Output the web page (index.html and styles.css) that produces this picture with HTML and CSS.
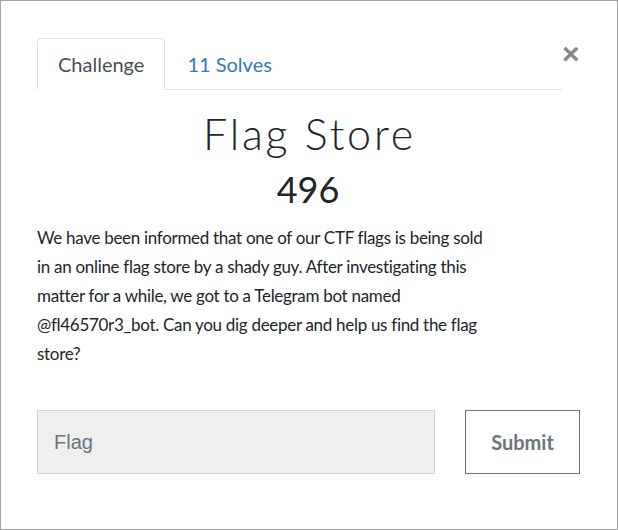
FILE: index.html
```html
<!DOCTYPE html>
<html>
<head>
<meta charset="utf-8">
<link rel="stylesheet" href="styles.css">
</head>
<body>
<div class="modal">
  <div class="header">
    <ul class="tabs">
      <li class="tab active">Challenge</li>
      <li class="tab link">11 Solves</li>
    </ul>
    <button class="close" aria-label="Close">&times;</button>
  </div>
  <h2 class="title">Flag Store</h2>
  <h3 class="value">496</h3>
  <p class="desc">We have been informed that one of our CTF flags is being sold in an online flag store by a shady guy. After investigating this matter for a while, we got to a Telegram bot named @fl46570r3_bot. Can you dig deeper and help us find the flag store?</p>
  <form class="form">
    <input class="flag" type="text" placeholder="Flag">
    <button class="submit" type="button">Submit</button>
  </form>
</div>
</body>
</html>
```

FILE: styles.css
```css
html, body {
  margin: 0;
  padding: 0;
  background: #fff;
}
.modal {
  box-sizing: border-box;
  width: 618px;
  height: 530px;
  border: 1px solid #a3a3a3;
  padding: 37px 38px 0 36px;
  font-family: Lato, "Noto Sans", sans-serif;
  color: #212529;
}
.header {
  display: flex;
  align-items: flex-start;
  padding-right: 1px;
}
.tabs {
  flex: 1;
  display: flex;
  list-style: none;
  margin: 0;
  padding: 0;
  border-bottom: 1px solid #dee2e6;
}
.tab {
  font-size: 20px;
  line-height: 26px;
  padding: 12px 20px 12px 20px;
  margin-bottom: -1px;
  border: 1px solid transparent;
  border-radius: 4px 4px 0 0;
}
.tab.active {
  color: #495057;
  border-color: #dee2e6 #dee2e6 #fff;
  background: #fff;
}
.tab.link {
  color: #337ab7;
  padding-left: 21px;
}
.close {
  background: none;
  border: 0;
  padding: 0;
  margin: 1px 0 0 0;
  width: 16px;
  height: 30px;
  font-family: "Liberation Sans", Arial, sans-serif;
  font-size: 30px;
  font-weight: 700;
  line-height: 30px;
  color: #858585;
}
.title {
  margin: 18px 0 0;
  padding-left: 3px;
  text-align: center;
  font-family: Lato, sans-serif;
  font-weight: 300;
  font-size: 43px;
  letter-spacing: 2.8px;
  line-height: 52px;
}
.value {
  margin: 7px 0 0;
  text-align: center;
  font-weight: 400;
  font-size: 36px;
  line-height: 44px;
}
.desc {
  margin: 12px 0 0;
  max-width: 458px;
  font-size: 17px;
  letter-spacing: -0.3px;
  line-height: 29px;
}
.form {
  display: flex;
  gap: 30px;
  margin-top: 42px;
}
.flag {
  box-sizing: border-box;
  width: 398px;
  height: 64px;
  flex: none;
  border: 1px solid #ced4da;
  background: #efefef;
  padding: 0 0 0 16px;
  font-family: "Liberation Sans", Arial, sans-serif;
  font-size: 20px;
  color: #495057;
}
.flag::placeholder {
  color: #6c757d;
}
.submit {
  box-sizing: border-box;
  width: 115px;
  height: 64px;
  flex: none;
  background: #fff;
  border: 1px solid #6c757d;
  border-radius: 0;
  font-family: Lato, sans-serif;
  font-weight: 700;
  font-size: 20px;
  color: #6c757d;
}
```
